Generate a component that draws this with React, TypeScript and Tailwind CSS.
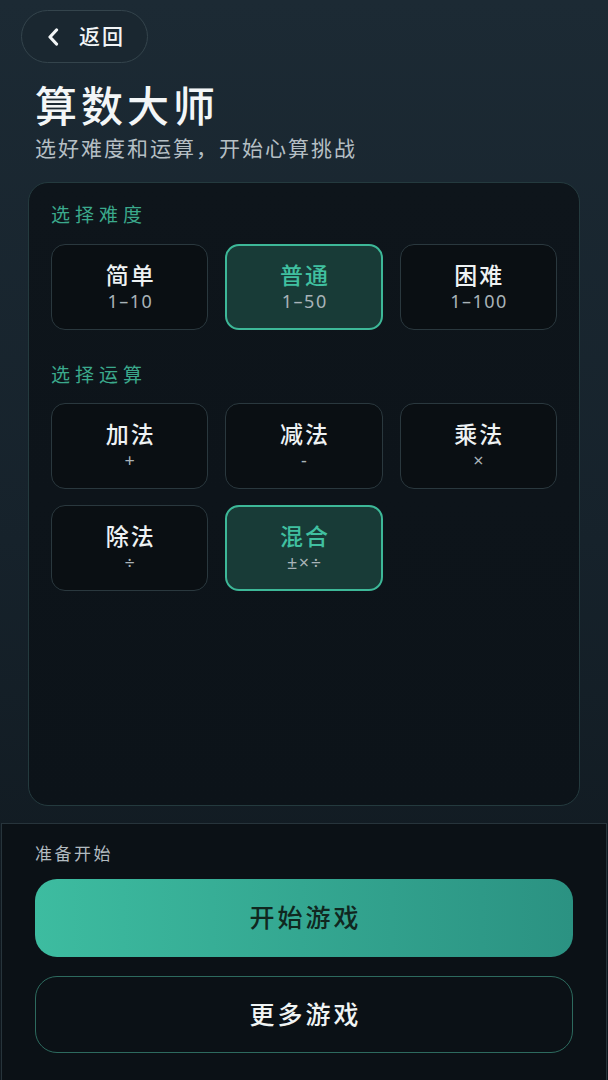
import React from "react";

const FONT = { fontFamily: '"Noto Sans", "Noto Sans CJK SC", sans-serif' };

type Opt = { title: string; sub: string; selected?: boolean };

function OptionButton({ title, sub, selected }: Opt) {
  return (
    <div
      className={
        "h-[86px] rounded-[14px] flex flex-col items-center justify-center " +
        (selected
          ? "bg-[#183b37] border-2 border-[#3db898]"
          : "bg-[#0a0f13] border-[1.5px] border-[#2a383e]")
      }
    >
      <div
        className={
          "text-[23px] leading-[29px] font-medium tracking-[2px] pl-[2px] " +
          (selected ? "text-[#40c0a0]" : "text-[#eef2f3]")
        }
      >
        {title}
      </div>
      <div className="text-[18px] leading-[23px] tracking-[1.5px] pl-[1.5px] text-[#a9b3b8]">{sub}</div>
    </div>
  );
}

export default function App() {
  const levels: Opt[] = [
    { title: "简单", sub: "1–10" },
    { title: "普通", sub: "1–50", selected: true },
    { title: "困难", sub: "1–100" },
  ];
  const ops: Opt[] = [
    { title: "加法", sub: "+" },
    { title: "减法", sub: "-" },
    { title: "乘法", sub: "×" },
    { title: "除法", sub: "÷" },
    { title: "混合", sub: "±×÷", selected: true },
  ];
  return (
    <div
      style={FONT}
      className="h-[1080px] w-full flex flex-col bg-gradient-to-b from-[#1c2a34] via-[#16222b] to-[#0f171d] overflow-hidden"
    >
      <div className="pt-[10px] pl-[21px]">
        <div className="h-[53px] w-[127px] rounded-full border-[1.5px] border-[#34444c] bg-[#1a2730] flex items-center pl-[25px]">
          <svg width="12" height="18" viewBox="0 0 12 18" className="shrink-0">
            <polyline
              points="9.5,2 3,9 9.5,16"
              fill="none"
              stroke="#f2f5f6"
              strokeWidth="3.2"
              strokeLinecap="round"
              strokeLinejoin="round"
            />
          </svg>
          <span className="ml-[20px] text-[21px] leading-none text-[#f2f5f6] font-medium tracking-[2px]">返回</span>
        </div>
      </div>
      <div className="mt-[18px] px-[35px]">
        <div className="text-[42px] leading-[48px] font-medium tracking-[4px] text-[#f3f6f7] pt-[1px] -mb-[1px]">算数大师</div>
        <div className="mt-[6px] text-[21px] leading-[26px] tracking-[2px] text-[#b5bfc4]">
          选好难度和运算，开始心算挑战
        </div>
      </div>
      <div className="mt-[21px] mx-[28px] mb-[17px] flex-1 rounded-[20px] border border-[#243a3e] bg-gradient-to-b from-[#0e151b] to-[#0c1319] px-[22px] pt-[20px]">
        <div className="text-[19px] leading-[24px] tracking-[5px] text-[#3ba98c]">选择难度</div>
        <div className="mt-[17px] grid grid-cols-3 gap-[17px]">
          {levels.map((o) => (
            <OptionButton key={o.title} {...o} />
          ))}
        </div>
        <div className="mt-[33px] text-[19px] leading-[24px] tracking-[5px] text-[#3ba98c]">选择运算</div>
        <div className="mt-[16px] grid grid-cols-3 gap-x-[17px] gap-y-[16px]">
          {ops.map((o) => (
            <OptionButton key={o.title} {...o} />
          ))}
        </div>
      </div>
      <div className="mx-[1px] border border-b-0 border-[#27343b] bg-[#0b1116] px-[33px] pt-[18px] pb-[27px]">
        <div className="text-[17px] leading-[24px] tracking-[2.5px] text-[#b2bbc0]">准备开始</div>
        <div className="mt-[13px] h-[78px] rounded-[22px] bg-gradient-to-r from-[#3dbca0] to-[#2b9282] flex items-center justify-center">
          <span className="text-[25px] font-medium tracking-[3px] pl-[3px] text-[#10271f]">开始游戏</span>
        </div>
        <div className="mt-[19px] h-[77px] rounded-[22px] border-[1.5px] border-[#2d6a5e] flex items-center justify-center">
          <span className="text-[25px] font-medium tracking-[3px] pl-[3px] text-[#f0f4f4]">更多游戏</span>
        </div>
      </div>
    </div>
  );
}
